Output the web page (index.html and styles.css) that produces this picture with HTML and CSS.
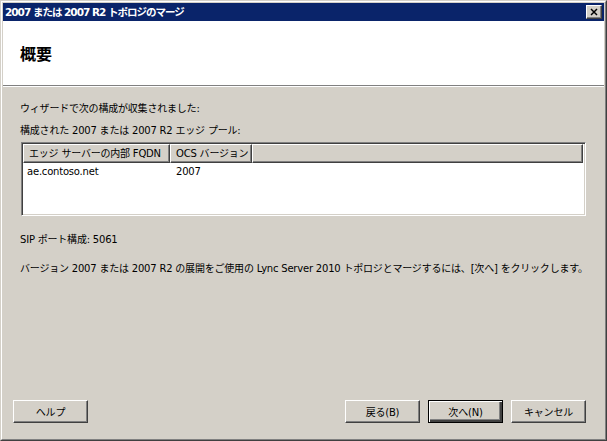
FILE: index.html
```html
<!DOCTYPE html>
<html lang="ja">
<head>
<meta charset="utf-8">
<title>2007 または 2007 R2 トポロジのマージ</title>
<link rel="stylesheet" href="styles.css">
</head>
<body>
<div class="window">
  <div class="frame">
    <div class="titlebar">
      <span class="title">2007 または 2007 R2 トポロジのマージ</span>
      <span class="close">
        <svg width="16" height="14" viewBox="0 0 16 14"><path d="M4.5 3.5 L11.5 10.5 M11.5 3.5 L4.5 10.5" stroke="#000" stroke-width="1.7" fill="none"/></svg>
      </span>
    </div>
    <div class="header">
      <h1 class="heading">概要</h1>
    </div>
    <div class="content">
      <p class="text line1">ウィザードで次の構成が収集されました:</p>
      <p class="text line2">構成された 2007 または 2007 R2 エッジ プール:</p>
      <div class="listview">
        <div class="lv-header">
          <div class="lv-col col1">エッジ サーバーの内部 FQDN</div>
          <div class="lv-col col2">OCS バージョン</div>
          <div class="lv-col col3"></div>
        </div>
        <div class="lv-row">
          <span class="cell col1">ae.contoso.net</span>
          <span class="cell col2">2007</span>
        </div>
      </div>
      <p class="text sip">SIP ポート構成: 5061</p>
      <p class="text desc">バージョン 2007 または 2007 R2 の展開をご使用の Lync Server 2010 トポロジとマージするには、[次へ] をクリックします。</p>
    </div>
    <div class="footer">
      <button class="btn">ヘルプ</button>
      <div class="spacer"></div>
      <button class="btn">戻る(B)</button>
      <button class="btn btn-default">次へ(N)</button>
      <button class="btn">キャンセル</button>
    </div>
  </div>
</div>
</body>
</html>
```
FILE: styles.css
```css
html, body {
  margin: 0;
  padding: 0;
  background: #d4d0c8;
}
body {
  font-family: "DejaVu Sans", "Noto Sans CJK JP", sans-serif;
  font-size: 10px;
  color: #000;
}
.window {
  width: 607px;
  height: 441px;
  box-sizing: border-box;
  border: 1px solid;
  border-color: #d4d0c8 #404040 #404040 #d4d0c8;
}
.frame {
  height: 100%;
  box-sizing: border-box;
  border: 1px solid;
  border-color: #fff #808080 #808080 #fff;
  padding: 1px;
  display: flex;
  flex-direction: column;
  background: #d4d0c8;
}
.titlebar {
  height: 18px;
  flex: none;
  background: #0a246a;
  display: flex;
  align-items: center;
  justify-content: space-between;
  padding: 0 2px 0 2px;
  color: #fff;
}
.title {
  font-weight: bold;
  font-size: 10.5px;
  letter-spacing: -1px;
  line-height: 18px;
  white-space: nowrap;
}
.close {
  width: 16px;
  height: 14px;
  box-sizing: border-box;
  background: #d4d0c8;
  border: 1px solid;
  border-color: #fff #404040 #404040 #fff;
  box-shadow: inset -1px -1px 0 #808080;
  display: flex;
  align-items: center;
  justify-content: center;
}
.close svg {
  display: block;
  width: 14px;
  height: 12px;
}
.header {
  height: 64px;
  flex: none;
  background: #fff;
  border-bottom: 1px solid #808080;
  box-shadow: 0 1px 0 #fff;
  display: flex;
  align-items: center;
  padding-left: 17px;
}
.heading {
  margin: 0;
  font-family: "Noto Sans CJK JP", sans-serif;
  font-size: 16px;
  font-weight: bold;
  line-height: 20px;
}
.content {
  flex: 1;
  padding: 16px 18px 0 17px;
}
.text {
  margin: 0;
  line-height: 13px;
  letter-spacing: -0.2px;
  white-space: nowrap;
}
.line2 {
  margin-top: 9px;
}
.listview {
  margin: 5px 0 0 1px;
  height: 74px;
  box-sizing: border-box;
  border: 1px solid;
  border-color: #808080 #fff #fff #808080;
  box-shadow: inset 1px 1px 0 #404040, inset -1px -1px 0 #d4d0c8;
  background: #fff;
  padding: 1px;
}
.lv-header {
  display: flex;
  height: 19px;
}
.lv-col {
  box-sizing: border-box;
  height: 19px;
  background: #d4d0c8;
  border: 1px solid;
  border-color: #fff #404040 #404040 #fff;
  box-shadow: inset -1px -1px 0 #808080;
  padding: 0 5px;
  line-height: 17px;
  letter-spacing: -0.2px;
  white-space: nowrap;
  overflow: hidden;
}
.lv-col.col1 {
  width: 147px;
}
.lv-col.col2 {
  width: 82px;
}
.lv-col.col3 {
  flex: 1;
  margin-right: 1px;
}
.lv-row {
  display: flex;
  padding-top: 2px;
  line-height: 13px;
  letter-spacing: -0.2px;
}
.cell.col1 {
  width: 147px;
  padding-left: 4px;
  box-sizing: border-box;
}
.cell.col2 {
  padding-left: 6px;
}
.sip {
  margin-top: 17px;
}
.desc {
  margin-top: 16px;
}
.footer {
  flex: none;
  display: flex;
  gap: 8px;
  padding: 0 18px 15px 10px;
}
.spacer {
  flex: 1;
}
.btn {
  width: 75px;
  height: 23px;
  box-sizing: border-box;
  margin: 0;
  padding: 0;
  font-family: "DejaVu Sans", "Noto Sans CJK JP", sans-serif;
  font-size: 10px;
  color: #000;
  letter-spacing: -0.2px;
  background: #d4d0c8;
  border: 1px solid;
  border-color: #fff #404040 #404040 #fff;
  box-shadow: inset -1px -1px 0 #808080;
}
.btn-default {
  border: 1px solid #000;
  box-shadow: inset 1px 1px 0 #fff, inset -2px -2px 0 #404040, inset -3px -3px 0 #808080;
}
```
